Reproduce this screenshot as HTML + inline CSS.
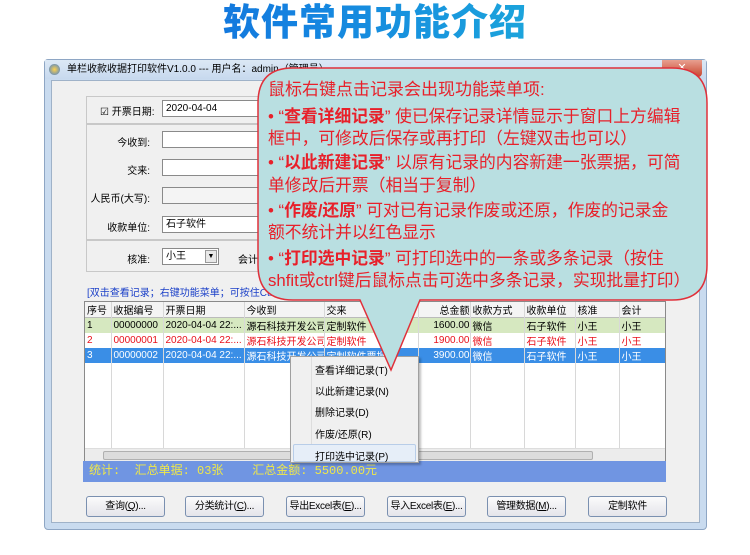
<!DOCTYPE html>
<html><head><meta charset="utf-8">
<style>
*{margin:0;padding:0;box-sizing:border-box}
body{width:750px;height:555px;background:#fff;position:relative;overflow:hidden;font-family:"Liberation Sans","Noto Sans CJK SC",sans-serif;font-size:11px;color:#000}
.abs{position:absolute}
.title{left:0;width:750px;top:0px;text-align:center;font-size:37px;font-weight:900;letter-spacing:1px;
background:linear-gradient(90deg,#0f5bd6,#1483e0 40%,#22c4d8);-webkit-background-clip:text;background-clip:text;color:transparent;line-height:46px}
.win{left:44px;top:59px;width:663px;height:471px;border:1px solid #8ea6c4;background:#c9dbef;border-radius:4px}
.tbar{left:0;top:0;width:661px;height:19px;background:linear-gradient(#dce8f5,#c7d9ee);font-size:10px;line-height:19px;padding-left:22px;color:#000}
.body{left:6px;top:20px;width:649px;height:443px;background:#f0f0f0;border:1px solid #9fb2c8}
.panel{border:1px solid #c8c8c8;background:#f0f0f0}
.lbl{text-align:right;width:80px;font-size:10px;white-space:nowrap}
.inp{background:#fff;border:1px solid #8a8a8a;height:17px;font-size:10px;line-height:15px;padding-left:3px}
table{border-collapse:collapse;font-size:10px;table-layout:fixed}
td{height:14px;border-right:1px solid #d8d8d8;padding-left:2px;white-space:nowrap;overflow:hidden}
.btn{top:496px;width:79px;height:21px;border:1px solid #7a90b0;border-radius:3px;background:linear-gradient(#fbfbfb,#e4e4ea);text-align:center;line-height:19px;font-size:10px;white-space:nowrap;letter-spacing:-.3px}
.menu{left:290px;top:356px;width:129px;height:107px;background:#f0f0f0;border:1px solid #a0a0a0;box-shadow:2px 2px 2px rgba(0,0,0,.25)}
.mi{position:absolute;left:24px;font-size:10px}
.bl{position:absolute;left:268px;font-size:16.8px;color:#e8202a;line-height:22px;white-space:nowrap}
</style></head><body>
<div class="abs title">软件常用功能介绍</div>

<div class="abs win">
  <div class="abs tbar"><span style="position:absolute;left:4px;top:4px;width:11px;height:11px;border-radius:50%;background:radial-gradient(#ffd34d,#3d7bd6)"></span>单栏收款收据打印软件V1.0.0 --- 用户名：admin（管理员）</div>
  <div class="abs" style="right:4px;top:0;width:40px;height:17px;background:linear-gradient(#e8a090,#c8452d);border-radius:0 0 4px 4px;color:#fff;text-align:center;font-size:11px;line-height:16px">✕</div>
  <div class="abs body"></div>
</div>

<!-- form -->
<div class="abs panel" style="left:86px;top:96px;width:400px;height:28px"></div>
<div class="abs panel" style="left:86px;top:124px;width:400px;height:116px"></div>
<div class="abs panel" style="left:86px;top:240px;width:400px;height:32px"></div>
<div class="abs" style="left:100px;top:103px;font-size:10px">☑ 开票日期:</div>
<div class="abs inp" style="left:162px;top:100px;width:120px">2020-04-04</div>
<div class="abs lbl" style="left:70px;top:134px">今收到:</div>
<div class="abs inp" style="left:162px;top:131px;width:120px"></div>
<div class="abs lbl" style="left:70px;top:162px">交来:</div>
<div class="abs inp" style="left:162px;top:159px;width:120px"></div>
<div class="abs lbl" style="left:70px;top:190px">人民币(大写):</div>
<div class="abs inp" style="left:162px;top:187px;width:120px;background:#f4f4f4"></div>
<div class="abs lbl" style="left:70px;top:219px">收款单位:</div>
<div class="abs inp" style="left:162px;top:216px;width:120px">石子软件</div>
<div class="abs lbl" style="left:70px;top:251px">核准:</div>
<div class="abs inp" style="left:162px;top:248px;width:57px">小王<span style="position:absolute;right:1px;top:1px;width:12px;height:13px;background:#e8e8e8;border:1px solid #999;font-size:7px;text-align:center;line-height:12px">▼</span></div>
<div class="abs" style="left:238px;top:251px;font-size:10px">会计</div>
<div class="abs" style="left:87px;top:284px;color:#1a3fc8;font-size:10px">[双击查看记录；右键功能菜单；可按住Ctrl或Shift</div>

<!-- table -->
<div class="abs" style="left:84px;top:301px;width:582px;height:161px;background:#fff;border:1px solid #8a8a8a;overflow:hidden">
<table style="width:580px">
<colgroup><col style="width:26px"><col style="width:52px"><col style="width:81px"><col style="width:80px"><col style="width:94px"><col style="width:52px"><col style="width:54px"><col style="width:51px"><col style="width:44px"><col style="width:46px"></colgroup>
<tr style="background:#f4f4f4;border-bottom:1px solid #bbb"><td>序号</td><td>收据编号</td><td>开票日期</td><td>今收到</td><td>交来</td><td style="text-align:right">总金额</td><td>收款方式</td><td>收款单位</td><td>核准</td><td>会计</td></tr>
<tr style="background:#d6e8c0"><td>1</td><td>00000000</td><td>2020-04-04 22:...</td><td>源石科技开发公司</td><td>定制软件</td><td style="text-align:right">1600.00</td><td>微信</td><td>石子软件</td><td>小王</td><td>小王</td></tr>
<tr style="color:#e8101a"><td>2</td><td>00000001</td><td>2020-04-04 22:...</td><td>源石科技开发公司</td><td>定制软件</td><td style="text-align:right">1900.00</td><td>微信</td><td>石子软件</td><td>小王</td><td>小王</td></tr>
<tr style="background:#3a8ee6;color:#fff"><td>3</td><td>00000002</td><td>2020-04-04 22:...</td><td>源石科技开发公司</td><td>定制软件票据</td><td style="text-align:right">3900.00</td><td>微信</td><td>石子软件</td><td>小王</td><td>小王</td></tr>
<tr><td style="height:90px"></td><td></td><td></td><td></td><td></td><td></td><td></td><td></td><td></td><td></td></tr>
</table>
<div class="abs" style="left:0;top:146px;width:580px;height:13px;background:#ececec;border-top:1px solid #ddd"><div class="abs" style="left:18px;top:2px;width:490px;height:9px;background:#dcdcdc;border:1px solid #b0b0b0;border-radius:2px"></div></div>
</div>

<div class="abs" style="left:83px;top:461px;width:583px;height:21px;background:#7095e2;color:#f0e848;font-size:12px;line-height:21px;padding-left:6px;font-family:'Liberation Mono','Noto Sans CJK SC',monospace">统计:&nbsp; 汇总单据: 03张&nbsp;&nbsp;&nbsp; 汇总金额: 5500.00元</div>

<div class="abs btn" style="left:86px">查询(<u>Q</u>)...</div>
<div class="abs btn" style="left:185px">分类统计(<u>C</u>)...</div>
<div class="abs btn" style="left:286px">导出Excel表(<u>E</u>)...</div>
<div class="abs btn" style="left:387px">导入Excel表(<u>E</u>)...</div>
<div class="abs btn" style="left:487px">管理数据(<u>M</u>)...</div>
<div class="abs btn" style="left:588px">定制软件</div>

<!-- context menu -->
<div class="abs menu">
<div class="abs" style="left:20px;top:0;width:1px;height:105px;background:#ddd"></div>
<div class="mi" style="top:5px">查看详细记录(T)</div>
<div class="mi" style="top:26px">以此新建记录(N)</div>
<div class="mi" style="top:47px">删除记录(D)</div>
<div class="mi" style="top:69px">作废/还原(R)</div>
<div class="abs" style="left:2px;top:87px;width:123px;height:18px;background:#e6eef8;border:1px solid #b8cde8;border-radius:2px"></div>
<div class="mi" style="top:91px">打印选中记录(P)</div>
</div>

<!-- callout -->
<svg class="abs" style="left:0;top:0" width="750" height="555">
<path d="M293 68 H672 Q707 68 707 103 V265 Q707 300 672 300 H420 L391 370 L360 300 H293 Q258 300 258 265 V103 Q258 68 293 68 Z" fill="#b9dfe1" stroke="#e0303a" stroke-width="1.5"/>
</svg>
<div class="bl" style="top:79px;font-size:17px">鼠标右键点击记录会出现功能菜单项:</div>
<div class="bl" style="top:106px">• “<b>查看详细记录</b>” 使已保存记录详情显示于窗口上方编辑</div>
<div class="bl" style="top:128px">框中，可修改后保存或再打印（左键双击也可以）</div>
<div class="bl" style="top:152px">• “<b>以此新建记录</b>” 以原有记录的内容新建一张票据，可简</div>
<div class="bl" style="top:175px">单修改后开票（相当于复制）</div>
<div class="bl" style="top:200px">• “<b>作废/还原</b>” 可对已有记录作废或还原，作废的记录金</div>
<div class="bl" style="top:222px">额不统计并以红色显示</div>
<div class="bl" style="top:248px">• “<b>打印选中记录</b>” 可打印选中的一条或多条记录（按住</div>
<div class="bl" style="top:270px">shfit或ctrl键后鼠标点击可选中多条记录，实现批量打印）</div>
</body></html>
